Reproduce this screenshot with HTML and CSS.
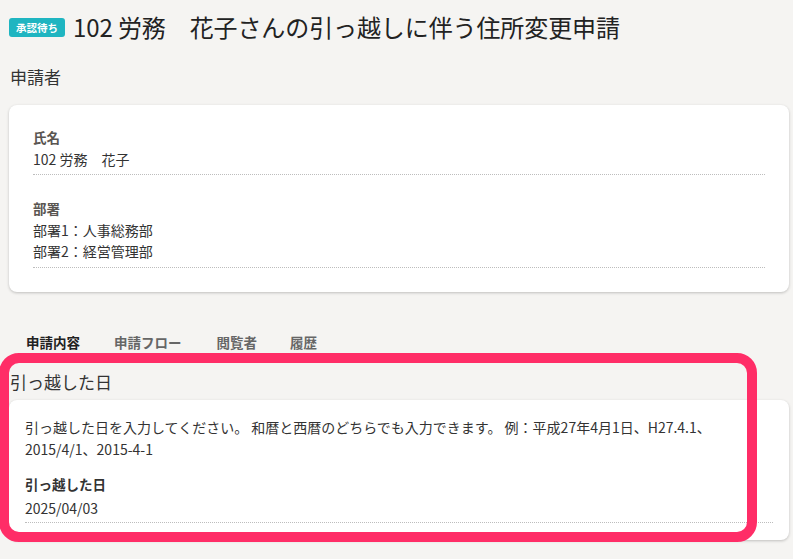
FILE: index.html
```html
<!DOCTYPE html>
<html lang="ja">
<head>
<meta charset="utf-8">
<link rel="stylesheet" href="styles.css">
</head>
<body>
<div class="page">
  <header class="header">
    <span class="badge">承認待ち</span>
    <h1 class="title">102 労務　花子さんの引っ越しに伴う住所変更申請</h1>
  </header>

  <h2 class="section-title">申請者</h2>
  <div class="card card-wide">
    <div class="field">
      <div class="label">氏名</div>
      <div class="value">102 労務　花子</div>
    </div>
    <div class="field field-next">
      <div class="label">部署</div>
      <div class="value multi">部署1：人事総務部<br>部署2：経営管理部</div>
    </div>
  </div>

  <nav class="tabs">
    <span class="tab active">申請内容</span>
    <span class="tab t2">申請フロー</span>
    <span class="tab t3">閲覧者</span>
    <span class="tab t4">履歴</span>
  </nav>

  <h2 class="section-title s2">引っ越した日</h2>
  <div class="card card-narrow">
    <p class="desc">引っ越した日を入力してください。 和暦と西暦のどちらでも入力できます。 例：平成27年4月1日、H27.4.1、<br>2015/4/1、2015-4-1</p>
    <div class="field2">
      <div class="label dark">引っ越した日</div>
      <div class="value v2">2025/04/03</div>
    </div>
  </div>

  <div class="highlight"></div>
</div>
</body>
</html>
```

FILE: styles.css
```css
* { box-sizing: border-box; }
html, body {
  margin: 0;
  padding: 0;
  background: #f5f4f2;
}
body {
  font-family: "Noto Sans CJK JP", "Noto Sans", sans-serif;
  color: #333;
}
.page {
  position: relative;
  width: 793px;
  height: 559px;
  overflow: hidden;
  padding: 0 4px 0 9px;
}
.header {
  display: flex;
  align-items: center;
  height: 36px;
  margin-top: 9px;
}
.badge {
  display: inline-block;
  background: #1fb5c1;
  color: #fff;
  font-size: 10.5px;
  font-weight: 700;
  line-height: 19px;
  padding: 0 7px;
  border-radius: 3px;
  margin-right: 8px;
}
.title {
  margin: 0;
  font-size: 24px;
  font-weight: 400;
  line-height: 36px;
  color: #222;
  letter-spacing: -0.1px;
}
.section-title {
  margin: 19px 0 15px 1px;
  font-size: 17px;
  font-weight: 400;
  line-height: 26px;
  color: #333;
}
.section-title.s2 {
  margin: 17px 0 5px 1px;
}
.card {
  background: #fff;
  border-radius: 8px;
  box-shadow: 0 1px 3px rgba(0,0,0,0.22);
}
.card-wide {
  padding: 22px 24px 24px;
}
.card-narrow {
  padding: 16px 16px 17px;
}
.field {
  border-bottom: 1px dotted #bdbdbd;
  padding-bottom: 4px;
}
.field-next {
  margin-top: 23px;
  padding-bottom: 5px;
}
.label {
  font-size: 13.5px;
  font-weight: 700;
  line-height: 20px;
  color: #5a5652;
}
.label.dark {
  color: #333;
}
.value {
  font-size: 14px;
  line-height: 21px;
  margin-top: 2px;
  color: #333;
}
.value.v2 {
  margin-top: 4px;
}
.tabs {
  display: flex;
  margin-top: 40px;
  height: 20px;
  padding-left: 17px;
}
.tab {
  font-size: 13.5px;
  font-weight: 700;
  line-height: 20px;
  color: #666;
}
.tab.active { color: #222; }
.tab.t2 { margin-left: 34px; }
.tab.t3 { margin-left: 35px; }
.tab.t4 { margin-left: 33px; }
.desc {
  margin: 0;
  font-size: 14px;
  line-height: 22px;
  color: #333;
}
.field2 {
  margin-top: 14px;
  border-bottom: 1px dotted #bdbdbd;
  padding-bottom: 3px;
}
.highlight {
  position: absolute;
  left: -1px;
  top: 353px;
  width: 758px;
  height: 189px;
  border: 10px solid #ff2d67;
  border-radius: 20px;
  pointer-events: none;
}
```
